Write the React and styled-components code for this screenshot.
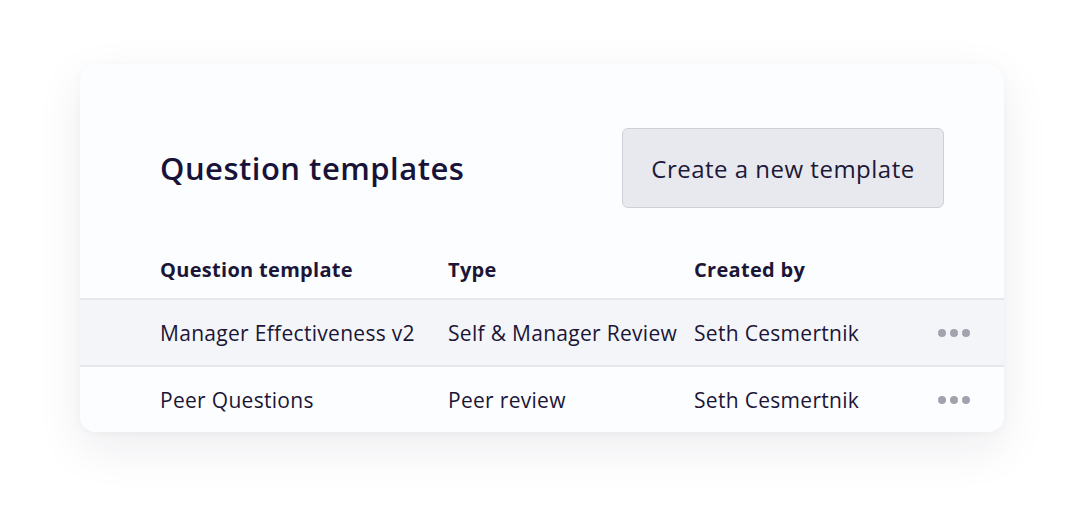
import styled, { createGlobalStyle } from 'styled-components';

const GlobalStyle = createGlobalStyle`
  html, body {
    margin: 0;
    padding: 0;
    background: #ffffff;
  }
  body {
    font-family: "Open Sans", "Noto Sans", sans-serif;
    color: #1b1637;
  }
`;

const Page = styled.div`
  width: 1084px;
  height: 528px;
  padding: 64px 80px 0;
  box-sizing: border-box;
`;

const Card = styled.div`
  width: 924px;
  background: #fcfdfe;
  border-radius: 16px;
  box-shadow: 0 16px 48px rgba(30, 30, 60, 0.08), 0 2px 8px rgba(30, 30, 60, 0.03);
  padding-top: 64px;
  overflow: hidden;
`;

const Header = styled.div`
  display: flex;
  align-items: center;
  justify-content: space-between;
  padding: 0 60px 0 80px;
  height: 80px;
`;

const Title = styled.h1`
  margin: 0;
  font-size: 31px;
  font-weight: 600;
  color: #19133a;
  letter-spacing: 0.5px;
`;

const Button = styled.button`
  height: 80px;
  width: 322px;
  box-sizing: border-box;
  background: #e8e8ef;
  border: 1.5px solid #cfcfd9;
  border-radius: 6px;
  font-family: inherit;
  font-size: 24px;
  color: #1d1838;
  letter-spacing: 0.5px;
  cursor: pointer;
`;

const Row = styled.div`
  display: grid;
  grid-template-columns: 288px 246px 244px 1fr;
  align-items: center;
  padding-left: 80px;
  box-sizing: border-box;
  height: ${p => p.$height}px;
  background: ${p => p.$bg || 'transparent'};
  border-top: ${p => (p.$line ? '2px solid #e6e7ec' : 'none')};
  font-size: ${p => (p.$head ? 20 : 21)}px;
  font-weight: ${p => (p.$head ? 700 : 400)};
  letter-spacing: 0.3px;
  color: #1b1637;
`;

const Cell = styled.div`
  white-space: nowrap;
`;

const Dots = styled.div`
  display: flex;
  gap: 4px;
`;

const Dot = styled.span`
  width: 8px;
  height: 8px;
  border-radius: 50%;
  background: #a3a2ae;
`;

const rows = [
  { name: 'Manager Effectiveness v2', type: 'Self & Manager Review', by: 'Seth Cesmertnik', bg: '#f4f5f8' },
  { name: 'Peer Questions', type: 'Peer review', by: 'Seth Cesmertnik', bg: '#fcfdfe' },
];

export default function App() {
  return (
    <Page>
      <GlobalStyle />
      <Card>
        <Header>
          <Title>Question templates</Title>
          <Button>Create a new template</Button>
        </Header>
        <Row $head $height={90} style={{ paddingTop: 32 }}>
          <Cell>Question template</Cell>
          <Cell>Type</Cell>
          <Cell>Created by</Cell>
        </Row>
        {rows.map(r => (
          <Row key={r.name} $line $height={67} $bg={r.bg}>
            <Cell>{r.name}</Cell>
            <Cell>{r.type}</Cell>
            <Cell>{r.by}</Cell>
            <Dots>
              <Dot />
              <Dot />
              <Dot />
            </Dots>
          </Row>
        ))}
      </Card>
    </Page>
  );
}
